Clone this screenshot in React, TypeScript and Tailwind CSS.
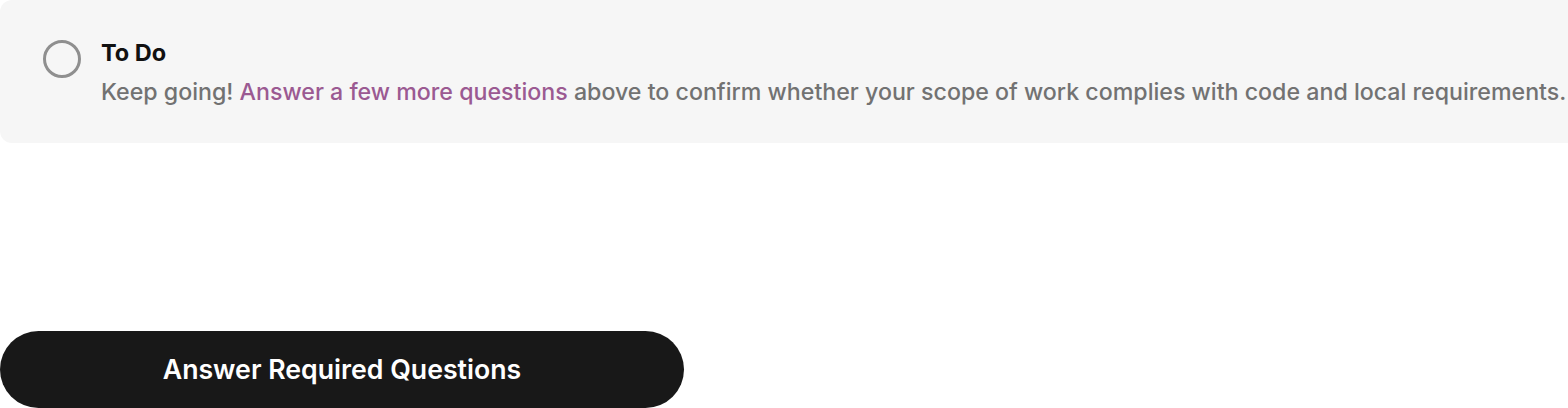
export default function App() {
  return (
    <div className="min-h-screen w-full overflow-hidden bg-white font-['Inter',sans-serif]">
      {/* Status card */}
      <div className="flex w-max min-w-full items-start gap-5 rounded-xl bg-[#f6f6f6] pl-[43px] pr-16 pt-[39px] pb-[35px]">
        <div className="mt-[1px] h-[38px] w-[38px] shrink-0 rounded-full border-[3px] border-[#8f8f8f]" />
        <div className="flex flex-col gap-[9px] whitespace-nowrap">
          <h3 className="text-[23.5px] leading-[28px] font-bold text-[#111111]">To Do</h3>
          <p className="text-[23.2px] leading-[32px] font-medium text-[#727272]">
            Keep going!{" "}
            <a href="#" className="text-[#9b5a92]">
              Answer a few more questions
            </a>{" "}
            above to confirm whether your scope of work complies with code and local requirements.
          </p>
        </div>
      </div>

      <div className="mt-[188px]">
        <button className="flex h-[77px] w-[684px] items-center justify-center rounded-full bg-[#181818] text-[26.7px] font-semibold text-white">
          Answer Required Questions
        </button>
      </div>
    </div>
  );
}
